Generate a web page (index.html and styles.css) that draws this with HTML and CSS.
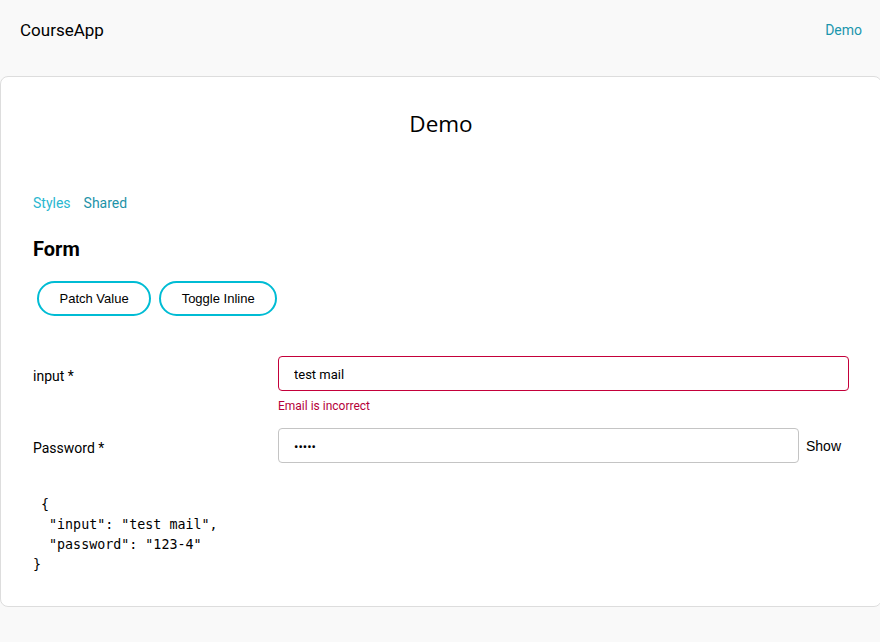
FILE: index.html
```html
<!DOCTYPE html>
<html>
<head>
<meta charset="utf-8">
<link rel="stylesheet" href="styles.css">
</head>
<body>
<header class="topbar">
  <span class="brand">CourseApp</span>
  <a class="nav-link" href="#">Demo</a>
</header>
<main class="card">
  <h1 class="title">Demo</h1>
  <nav class="tabs">
    <a class="tab tab-light" href="#">Styles</a>
    <a class="tab" href="#">Shared</a>
  </nav>
  <h2 class="section">Form</h2>
  <div class="actions">
    <button class="pill">Patch Value</button>
    <button class="pill">Toggle Inline</button>
  </div>
  <form class="form">
    <div class="row">
      <label class="label">input *</label>
      <div class="field">
        <input class="control invalid" type="text" value="test mail">
        <div class="error">Email is incorrect</div>
      </div>
    </div>
    <div class="row">
      <label class="label">Password *</label>
      <div class="field field-inline">
        <input class="control" type="password" value="12345">
        <span class="show">Show</span>
      </div>
    </div>
  </form>
  <pre class="json"> {
  "input": "test mail",
  "password": "123-4"
}</pre>
</main>
</body>
</html>
```

FILE: styles.css
```css
html, body {
  margin: 0;
  padding: 0;
  background: #f9f9f9;
  overflow: hidden;
  font-family: Roboto, "Liberation Sans", Arial, sans-serif;
  color: #000;
}

.topbar {
  height: 60px;
  display: flex;
  align-items: center;
  justify-content: space-between;
  padding: 0 18px 0 20px;
}

.brand {
  font-size: 17px;
  color: #000;
}

.nav-link {
  font-size: 14px;
  color: #1a96ad;
  text-decoration: none;
}

.card {
  margin-top: 16px;
  width: 816px;
  background: #fff;
  border: 1px solid #dddddd;
  border-radius: 8px;
  padding: 0 32px 31px 32px;
}

.title {
  margin: 31px 0 0 0;
  font-family: "Open Sans", "Noto Sans", sans-serif;
  font-weight: 400;
  font-size: 22.5px;
  line-height: 32px;
  text-align: center;
  color: #000;
}

.tabs {
  margin-top: 53px;
  display: flex;
  gap: 13px;
  height: 20px;
  align-items: center;
}

.tab {
  font-size: 14px;
  color: #1d93a8;
  text-decoration: none;
}

.tab-light {
  color: #2ab7d0;
}

.section {
  margin: 24px 0 0 0;
  font-size: 20px;
  line-height: 24px;
  font-weight: 700;
  color: #000;
}

.actions {
  margin: 20px 0 0 4px;
  display: flex;
  gap: 8px;
}

.pill {
  height: 35px;
  padding: 0 20.5px;
  border: 2px solid #00bcd4;
  border-radius: 18px;
  background: #fff;
  font-family: "Liberation Sans", Arial, sans-serif;
  font-size: 13px;
  color: #000;
}

.form {
  margin-top: 40px;
  display: flex;
  flex-direction: column;
  gap: 14px;
}

.row {
  display: grid;
  grid-template-columns: 245px 1fr;
}

.label {
  padding-top: 10px;
  font-size: 14px;
  line-height: 20px;
  color: #000;
}

.field-inline {
  display: flex;
  align-items: center;
}

.control {
  box-sizing: border-box;
  width: 100%;
  height: 35px;
  border: 1px solid #c4c4c4;
  border-radius: 4px;
  padding: 1px 15px 0 15px;
  font-family: Roboto, sans-serif;
  font-size: 13px;
  color: #000;
  background: #fff;
  outline: none;
  display: block;
}

.field-inline .control {
  flex: 1;
  width: auto;
}

.invalid {
  border-color: #c4003a;
}

.error {
  margin-top: 7px;
  font-size: 12px;
  line-height: 16px;
  color: #b5003a;
}

.show {
  padding: 0 8px 0 7px;
  font-family: "Liberation Sans", Arial, sans-serif;
  font-size: 14px;
  color: #000;
}

.json {
  margin: 32px 0 0 0;
  font-family: "DejaVu Sans Mono", monospace;
  font-size: 13.33px;
  line-height: 20px;
  color: #000;
}
```
